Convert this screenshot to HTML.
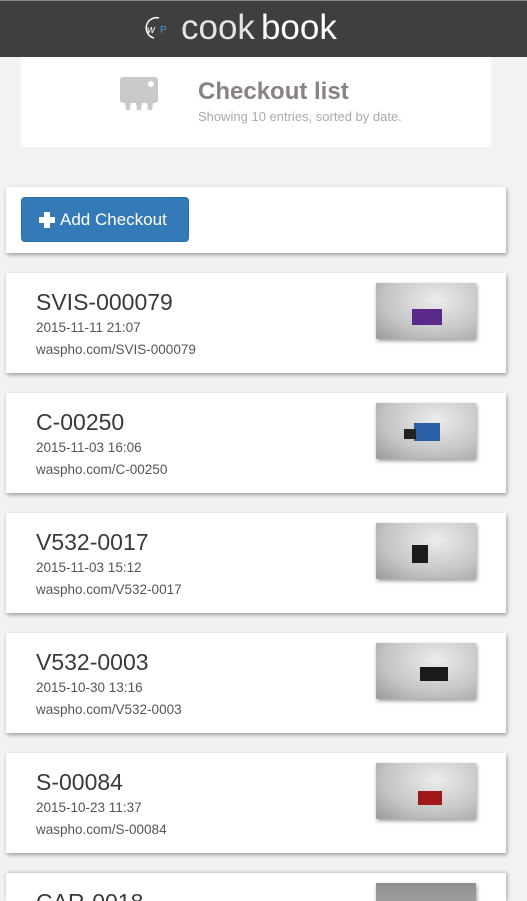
<!DOCTYPE html>
<html style="height:901px;overflow:hidden"><head><style>
body{margin:0;background:#f3f2f2;font-family:"Liberation Sans",sans-serif;width:527px;height:901px;overflow:hidden;position:relative}
.hdr{position:absolute;left:0;top:0;width:527px;height:57px;background:#3f3f3f;border-top:1px solid #888;box-sizing:border-box}
.logo{position:absolute;left:181px;top:9px;color:#fff;font-size:35px;line-height:35px;white-space:nowrap}
.logo .l{color:#e4e4e4;margin-right:6px}
.wp{position:absolute;left:145px;top:15px;width:24px;height:24px}
.top{position:absolute;left:21px;top:57px;width:470px;height:90px;background:#fff;border-radius:0 0 4px 4px}
.card{position:absolute;left:6px;width:500px;background:#fff;box-shadow:1px 2px 4px rgba(0,0,0,.35);overflow:hidden}
.btn{position:absolute;left:15px;top:10px;width:168px;height:45px;background:#337ab7;border:1px solid #2e6da4;border-radius:4px;box-sizing:border-box;color:#fff;font-size:17px;line-height:43px;padding-left:38px}
.plus{position:absolute;left:17px;top:14px;width:16px;height:16px}
.plus:before{content:"";position:absolute;left:5px;top:0;width:6px;height:16px;background:#fff}
.plus:after{content:"";position:absolute;left:0;top:5px;width:16px;height:6px;background:#fff}
.t{position:absolute;left:30px;top:16px;font-size:23px;color:#3a3a3a}
.d{position:absolute;left:30px;top:47px;font-size:13.5px;color:#555}
.u{position:absolute;left:30px;top:69px;font-size:13.5px;color:#555}
.img{position:absolute;left:370px;top:10px;width:100px;height:56px;background:radial-gradient(ellipse at 60% 30%,#ececec,#c4c4c4 60%,#9a9a9a);box-shadow:1px 2px 4px rgba(0,0,0,.4)}
.img i{position:absolute;display:block}
</style></head><body>
<div class="hdr">
<svg class="wp" viewBox="0 0 24 24"><path d="M14 2 A10 10 0 0 0 9 22" fill="none" stroke="#fff" stroke-width="1.5"/><text x="2" y="17" font-size="11" font-style="italic" fill="#fff" font-family="Liberation Sans">w</text><text x="15" y="17" font-size="10" fill="#3a9ad9" font-family="Liberation Sans">P</text></svg>
<div class="logo"><span class="l">cook</span>book</div></div>
<div class="top">
<svg style="position:absolute;left:98px;top:19px" width="40" height="36"><rect x="1" y="1" width="38" height="26" rx="3" fill="#c9c9c9"/><circle cx="32" cy="8" r="3" fill="#fff"/><path d="M6 27h6l-1 7h-4zM17 27h6l-1 7h-4zM28 27h6l-1 7h-4z" fill="#c9c9c9"/></svg>
<div style="position:absolute;left:177px;top:21px;font-size:24px;font-weight:bold;color:#8a8181">Checkout list</div>
<div style="position:absolute;left:177px;top:52px;font-size:13px;color:#aaa">Showing 10 entries, sorted by date.</div>
</div>
<div class="card" style="top:187px;height:66px"><div class="btn"><span class="plus"></span>Add Checkout</div></div>
<div class="card" style="top:273px;height:100px"><div class="t">SVIS-000079</div><div class="d">2015-11-11 21:07</div><div class="u">waspho.com/SVIS-000079</div><div class="img"><i style="left:36px;top:26px;width:30px;height:16px;background:#5a2a8a"></i></div></div>
<div class="card" style="top:393px;height:100px"><div class="t">C-00250</div><div class="d">2015-11-03 16:06</div><div class="u">waspho.com/C-00250</div><div class="img"><i style="left:38px;top:20px;width:26px;height:18px;background:#2a5fa8"></i><i style="left:28px;top:26px;width:12px;height:10px;background:#222"></i></div></div>
<div class="card" style="top:513px;height:100px"><div class="t">V532-0017</div><div class="d">2015-11-03 15:12</div><div class="u">waspho.com/V532-0017</div><div class="img"><i style="left:36px;top:22px;width:16px;height:18px;background:#1a1a1a"></i></div></div>
<div class="card" style="top:633px;height:100px"><div class="t">V532-0003</div><div class="d">2015-10-30 13:16</div><div class="u">waspho.com/V532-0003</div><div class="img"><i style="left:44px;top:24px;width:28px;height:14px;background:#1a1a1a"></i></div></div>
<div class="card" style="top:753px;height:100px"><div class="t">S-00084</div><div class="d">2015-10-23 11:37</div><div class="u">waspho.com/S-00084</div><div class="img"><i style="left:42px;top:28px;width:24px;height:14px;background:#a01818"></i></div></div>
<div class="card" style="top:873px;height:28px;box-shadow:1px 0 4px rgba(0,0,0,.35)"><div class="t">CAR-0018</div><div class="img" style="background:linear-gradient(#8f8f8f,#bbb)"></div></div>
</body></html>
